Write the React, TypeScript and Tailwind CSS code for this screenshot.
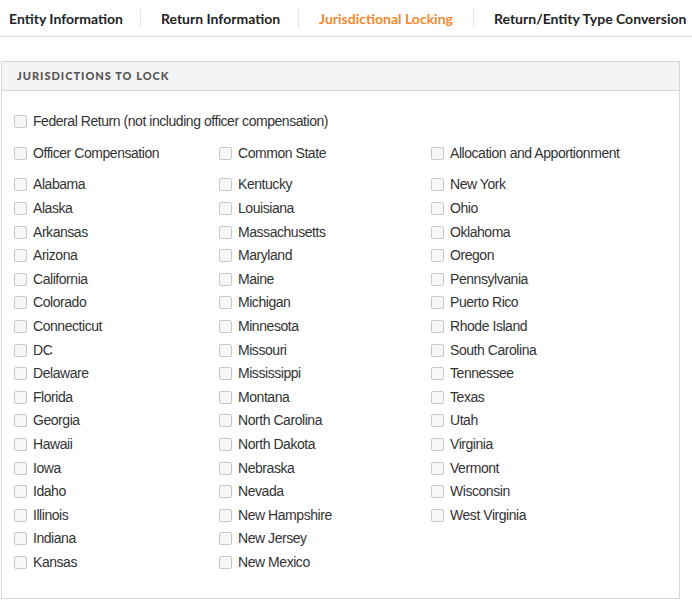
import React from "react";

const col1 = [
  "Alabama", "Alaska", "Arkansas", "Arizona", "California", "Colorado", "Connecticut", "DC",
  "Delaware", "Florida", "Georgia", "Hawaii", "Iowa", "Idaho", "Illinois", "Indiana", "Kansas",
];
const col2 = [
  "Kentucky", "Louisiana", "Massachusetts", "Maryland", "Maine", "Michigan", "Minnesota", "Missouri",
  "Mississippi", "Montana", "North Carolina", "North Dakota", "Nebraska", "Nevada", "New Hampshire",
  "New Jersey", "New Mexico",
];
const col3 = [
  "New York", "Ohio", "Oklahoma", "Oregon", "Pennsylvania", "Puerto Rico", "Rhode Island",
  "South Carolina", "Tennessee", "Texas", "Utah", "Virginia", "Vermont", "Wisconsin", "West Virginia",
];

function Check({ label }: { label: string }) {
  return (
    <label className="flex h-[23.6px] items-center gap-[6px] font-[Liberation_Sans,Arial,sans-serif] text-[14px] tracking-[-0.45px] text-[#333]">
      <span className="h-[13px] w-[13px] shrink-0 rounded-[2px] border border-[#c8c8c8] bg-[#f7f7f7]" />
      <span>{label}</span>
    </label>
  );
}

export default function App() {
  return (
    <div className="h-[611px] w-[692px] bg-white">
      {/* Tabs */}
      <div className="flex h-[37px] items-center whitespace-nowrap border-b border-[#dcdcdc] font-[Lato,sans-serif]">
        <div className="pl-[9px] pr-[17px] text-[14px] font-bold text-[#222]">Entity Information</div>
        <div className="h-[19px] w-px bg-[#e2e4ee]" />
        <div className="pl-[20px] pr-[18px] text-[14px] font-bold text-[#222]">Return Information</div>
        <div className="h-[19px] w-px bg-[#eee2e4]" />
        <div className="px-[20px] text-[14px] font-bold text-[#f7872e]">Jurisdictional Locking</div>
        <div className="h-[19px] w-px bg-[#f1dede]" />
        <div className="pl-[20px] text-[14px] font-bold text-[#222]">Return/Entity Type Conversion</div>
      </div>

      {/* Panel */}
      <div className="ml-[1px] mt-[24px] w-[679px] border border-[#d6d6d6]">
        <div className="flex h-[29px] items-center border-b border-[#d6d6d6] bg-[#f3f4f6] pl-[15px] font-[Lato,sans-serif] text-[11px] font-black tracking-[1px] text-[#555]">
          JURISDICTIONS TO LOCK
        </div>
        <div className="px-[12px] pb-[24px] pt-[19px]">
          <div className="mb-[8px]">
            <Check label="Federal Return (not including officer compensation)" />
          </div>
          <div className="mb-[8px] grid grid-cols-[205px_212px_1fr]">
            <Check label="Officer Compensation" />
            <Check label="Common State" />
            <Check label="Allocation and Apportionment" />
          </div>
          <div className="grid grid-cols-[205px_212px_1fr]">
            <div>{col1.map((s) => <Check key={s} label={s} />)}</div>
            <div>{col2.map((s) => <Check key={s} label={s} />)}</div>
            <div>{col3.map((s) => <Check key={s} label={s} />)}</div>
          </div>
        </div>
      </div>
    </div>
  );
}
